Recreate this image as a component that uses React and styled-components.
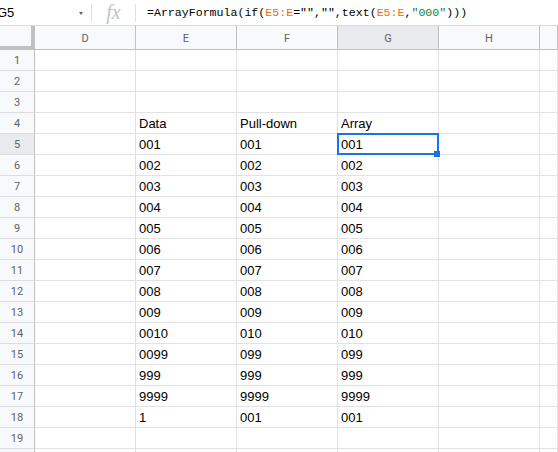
import React from 'react';
import styled, { createGlobalStyle } from 'styled-components';

const GlobalStyle = createGlobalStyle`
    html, body {
        margin: 0;
        padding: 0;
        background: #fff;
    }
`;

const columns = ['D', 'E', 'F', 'G', 'H', ''];

// rows 4..18 hold the table, columns E, F, G
const table = {
    4: ['Data', 'Pull-down', 'Array'],
    5: ['001', '001', '001'],
    6: ['002', '002', '002'],
    7: ['003', '003', '003'],
    8: ['004', '004', '004'],
    9: ['005', '005', '005'],
    10: ['006', '006', '006'],
    11: ['007', '007', '007'],
    12: ['008', '008', '008'],
    13: ['009', '009', '009'],
    14: ['0010', '010', '010'],
    15: ['0099', '099', '099'],
    16: ['999', '999', '999'],
    17: ['9999', '9999', '9999'],
    18: ['1', '001', '001'],
};

// row 20 only peeks in at the bottom edge, so its number is left off
const rowNumbers = Array.from({ length: 20 }, (_, i) => i + 1);

const App = () => (
    <Page>
        <GlobalStyle />
        <FormulaBar>
            <NameBox>
                <NameText>G5</NameText>
                <DropArrow />
            </NameBox>
            <Divider />
            <FxBox>fx</FxBox>
            <Divider />
            <FormulaInput>
                =ArrayFormula(if(<Token $color="#e8710a">E5:E</Token>="","",text(<Token $color="#e8710a">E5:E</Token>,<Token $color="#188038">"000"</Token>)))
            </FormulaInput>
        </FormulaBar>

        <Grid>
            <Corner />
            {columns.map((col, i) => (
                <ColHeader key={`h${i}`} $selected={col === 'G'}>{col}</ColHeader>
            ))}

            {rowNumbers.map((row) => (
                <React.Fragment key={row}>
                    <RowHeader $selected={row === 5}>{row < 20 ? row : ''}</RowHeader>
                    {columns.map((col, i) => {
                        const values = table[row];
                        const value = values && i >= 1 && i <= 3 ? values[i - 1] : '';
                        const active = row === 5 && col === 'G';
                        return (
                            <Cell key={`${row}-${i}`}>
                                {value}
                                {active && (
                                    <>
                                        <Selection />
                                        <FillHandle />
                                    </>
                                )}
                            </Cell>
                        );
                    })}
                </React.Fragment>
            ))}
        </Grid>
    </Page>
);

export default App;

const Page = styled.div`
    width: 558px;
    height: 452px;
    overflow: hidden;
    font-family: "Liberation Sans", Arial, sans-serif;
    color: #000;
`;

const FormulaBar = styled.div`
    display: flex;
    align-items: center;
    height: 26px;
    box-sizing: border-box;
    border-bottom: 1px solid #dadce0;
    background: #fff;
`;

const NameBox = styled.div`
    width: 91px;
    height: 100%;
    display: flex;
    align-items: center;
    justify-content: space-between;
    padding-right: 8px;
    box-sizing: border-box;
    overflow: hidden;
`;

const NameText = styled.span`
    margin-left: -3px;
    font-size: 13px;
    color: #000;
`;

const DropArrow = styled.span`
    width: 0;
    height: 0;
    margin-top: 2px;
    border-left: 2.5px solid transparent;
    border-right: 2.5px solid transparent;
    border-top: 3px solid #666;
`;

const Divider = styled.span`
    width: 1px;
    height: 18px;
    background: #e0e0e0;
`;

const FxBox = styled.span`
    width: 43px;
    text-align: center;
    font-family: "Liberation Serif", "Times New Roman", serif;
    font-style: italic;
    font-size: 20px;
    line-height: 20px;
    color: #c4c4c4;
    margin-top: -2px;
`;

const FormulaInput = styled.div`
    padding-left: 11px;
    font-family: "Liberation Mono", "Courier New", monospace;
    font-size: 11.6px;
    color: #000;
    white-space: nowrap;
`;

const Token = styled.span`
    color: ${(p) => p.$color};
`;

const Grid = styled.div`
    display: grid;
    grid-template-columns: 35px repeat(5, 101px) 1fr;
    grid-template-rows: 24px;
    grid-auto-rows: 21px;
`;

const Corner = styled.div`
    background: #f8f9fa;
    border-right: 4px solid #c0c0c0;
    border-bottom: 4px solid #c0c0c0;
    box-sizing: border-box;
`;

const ColHeader = styled.div`
    display: flex;
    align-items: center;
    justify-content: center;
    box-sizing: border-box;
    background: ${(p) => (p.$selected ? '#e8eaed' : '#f8f9fa')};
    border-right: 1px solid #c0c0c0;
    border-bottom: 1px solid #c0c0c0;
    font-family: Roboto, "Liberation Sans", sans-serif;
    font-size: 11px;
    color: #5f6368;
    padding-top: 1px;
`;

const RowHeader = styled.div`
    display: flex;
    align-items: center;
    justify-content: center;
    box-sizing: border-box;
    background: ${(p) => (p.$selected ? '#e8eaed' : '#f8f9fa')};
    border-right: 1px solid #c0c0c0;
    border-bottom: 1px solid #dadce0;
    font-family: Roboto, "Liberation Sans", sans-serif;
    font-size: 11px;
    color: #5f6368;
`;

const Cell = styled.div`
    position: relative;
    display: flex;
    align-items: flex-end;
    box-sizing: border-box;
    padding: 0 3px 2px;
    border-right: 1px solid #e2e2e3;
    border-bottom: 1px solid #e2e2e3;
    font-size: 13px;
    line-height: 15px;
    white-space: nowrap;
`;

const Selection = styled.div`
    position: absolute;
    top: -1px;
    left: -1px;
    width: 102px;
    height: 22px;
    box-sizing: border-box;
    border: 2px solid #1a73e8;
    pointer-events: none;
`;

const FillHandle = styled.div`
    position: absolute;
    left: 96px;
    top: 17px;
    width: 6px;
    height: 6px;
    background: #1a73e8;
    z-index: 1;
`;
